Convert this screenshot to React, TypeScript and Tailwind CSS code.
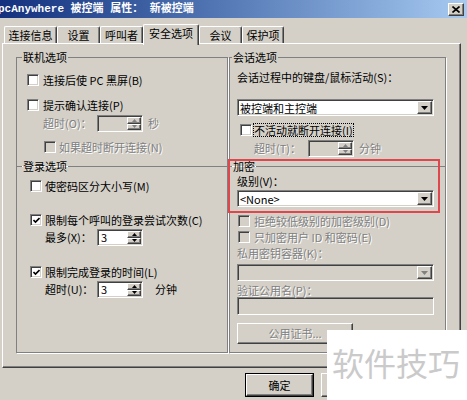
import React from 'react';
import clsx from 'clsx';

// win2k classic bevels
const sunken =
  'border border-t-[#808080] border-l-[#808080] border-r-white border-b-white shadow-[inset_1px_1px_0_#404040,inset_-1px_-1px_0_#d4d0c8]';
const raised =
  'border border-t-white border-l-white border-r-[#404040] border-b-[#404040] shadow-[inset_-1px_-1px_0_#808080,inset_1px_1px_0_#d4d0c8]';
const dim = 'text-[#808080] [text-shadow:1px_1px_0_#fff]';

function Box({ checked, disabled }: { checked?: boolean; disabled?: boolean }) {
  return (
    <span
      className={clsx(
        'w-[12px] h-[12px] flex items-center justify-center shrink-0',
        sunken,
        disabled ? 'bg-[#d4d0c8]' : 'bg-white'
      )}
    >
      {checked && (
        <svg width="7" height="7" viewBox="0 0 7 7">
          <path d="M0.5 3 L2.5 5 L6.5 1" stroke="#000" strokeWidth="1.6" fill="none" />
        </svg>
      )}
    </span>
  );
}

function Spin({ value, disabled }: { value?: string; disabled?: boolean }) {
  const arrow = disabled ? '#808080' : '#000';
  return (
    <div className={clsx('flex w-[46px] h-[17px] shrink-0', sunken, disabled ? 'bg-[#d4d0c8]' : 'bg-white')}>
      <span className="flex-1 pl-[3px] leading-[15px]">{value}</span>
      <div className="flex flex-col w-[14px] my-[1px] mr-[1px]">
        <span className={clsx('flex-1 flex items-center justify-center bg-[#d4d0c8]', raised)}>
          <svg width="5" height="3" viewBox="0 0 5 3"><path d="M2.5 0 L5 3 L0 3 Z" fill={arrow} /></svg>
        </span>
        <span className={clsx('flex-1 flex items-center justify-center bg-[#d4d0c8]', raised)}>
          <svg width="5" height="3" viewBox="0 0 5 3"><path d="M0 0 L5 0 L2.5 3 Z" fill={arrow} /></svg>
        </span>
      </div>
    </div>
  );
}

function Select({ value, disabled, className }: { value?: string; disabled?: boolean; className?: string }) {
  return (
    <div
      className={clsx(
        'flex items-center w-[197px] ml-[7px]',
        sunken,
        disabled ? 'bg-[#d4d0c8]' : 'bg-white',
        className
      )}
    >
      <span className="flex-1 pl-[2px] leading-[14px]">{value}</span>
      <span className={clsx('w-[15px] h-[13px] mr-[1px] flex items-center justify-center bg-[#d4d0c8]', raised)}>
        <svg width="7" height="4" viewBox="0 0 7 4">
          <path d="M0 0 L7 0 L3.5 4 Z" fill={disabled ? '#808080' : '#000'} />
        </svg>
      </span>
    </div>
  );
}

function Group({
  title,
  className,
  legendClass,
  children,
}: {
  title: string;
  className?: string;
  legendClass?: string;
  children?: React.ReactNode;
}) {
  return (
    <fieldset className={clsx('border border-[#808080] shadow-[1px_1px_0_#fff] min-w-0', className)}>
      <legend className={clsx('px-[1px] leading-[14px]', legendClass)}>{title}</legend>
      {children}
    </fieldset>
  );
}

const tabs = [
  { label: '连接信息', w: 'w-[53px]' },
  { label: '设置', w: 'w-[43px]' },
  { label: '呼叫者', w: 'w-[43px]' },
  { label: '安全选项', w: 'w-[56px]', active: true },
  { label: '会议', w: 'w-[43px]' },
  { label: '保护项', w: 'w-[42px]' },
];

export default function App() {
  return (
    <div className="relative w-[467px] h-[400px] overflow-hidden bg-[#d4d0c8] text-[11px] text-black font-['Noto_Sans_CJK_SC','Liberation_Sans',sans-serif]">
      {/* title bar */}
      <div className="flex items-center justify-between h-[18px] bg-gradient-to-r from-[#14307e] to-[#a6caf0]">
        <span className="-ml-[2px] text-white font-bold text-[11px] leading-[18px] font-['Liberation_Mono','Noto_Sans_CJK_SC',monospace]">
          pcAnywhere 被控端 属性： 新被控端
        </span>
        <span className={clsx('w-[16px] h-[13px] mr-[3px] flex items-center justify-center bg-[#d4d0c8]', raised)}>
          <svg width="8" height="7" viewBox="0 0 8 7">
            <path d="M0.5 0.5 L7.5 6.5 M7.5 0.5 L0.5 6.5" stroke="#000" strokeWidth="1.6" />
          </svg>
        </span>
      </div>

      {/* tabs */}
      <div className="flex items-end h-[19px] mt-[6px] pl-[4px]">
        {tabs.map((t) => (
          <div
            key={t.label}
            className={clsx(
              t.w,
              'flex items-center justify-center bg-[#d4d0c8] border-l border-t border-r border-l-white border-t-white border-r-[#404040] shadow-[inset_-1px_0_0_#808080] rounded-t-[2px]',
              t.active ? 'h-[21px] -mb-[2px] relative z-10 pb-[3px]' : 'h-[17px]'
            )}
          >
            {t.label}
          </div>
        ))}
      </div>

      {/* tab panel */}
      <div className="flex gap-[1px] ml-[2px] w-[459px] h-[325px] pl-[13px] pt-[6px] border border-t-white border-l-white border-r-[#404040] border-b-[#404040] shadow-[inset_-1px_-1px_0_#808080]">
        {/* left column */}
        <div className="flex flex-col w-[212px]">
          <Group title="联机选项" legendClass="ml-[5px]" className="h-[116px] border-b-0">
            <div className="flex items-center h-[16px] mt-[8px] pl-[10px] gap-[4px]">
              <Box />
              <span>连接后使 PC 黑屏(B)</span>
            </div>
            <div className="flex items-center h-[16px] mt-[9px] pl-[10px] gap-[4px]">
              <Box />
              <span>提示确认连接(P)</span>
            </div>
            <div className="flex items-center h-[17px] mt-[2px] pl-[26px]">
              <span className={clsx('w-[54px]', dim)}>超时(O)：</span>
              <Spin disabled />
              <span className={clsx('ml-[5px]', dim)}>秒</span>
            </div>
            <div className="flex items-center h-[16px] mt-[7px] pl-[27px] gap-[3px]">
              <Box disabled />
              <span className={dim}>如果超时断开连接(N)</span>
            </div>
          </Group>
          <Group title="登录选项" legendClass="ml-[5px]" className="h-[194px] -mt-[7px]">
            <div className="flex items-center h-[16px] mt-[5px] pl-[13px] gap-[3px]">
              <Box />
              <span>使密码区分大小写(M)</span>
            </div>
            <div className="flex items-center h-[16px] mt-[18px] pl-[13px] gap-[3px]">
              <Box checked />
              <span>限制每个呼叫的登录尝试次数(C)</span>
            </div>
            <div className="flex items-center h-[17px] mt-[1px] pl-[28px]">
              <span className="w-[52px]">最多(X)：</span>
              <Spin value="3" />
            </div>
            <div className="flex items-center h-[16px] mt-[18px] pl-[13px] gap-[3px]">
              <Box checked />
              <span>限制完成登录的时间(L)</span>
            </div>
            <div className="flex items-center h-[17px] mt-[1px] pl-[28px]">
              <span className="w-[52px]">超时(U)：</span>
              <Spin value="3" />
              <span className="ml-[12px]">分钟</span>
            </div>
          </Group>
        </div>

        {/* right column */}
        <div className="flex flex-col w-[217px]">
          <Group title="会话选项" legendClass="ml-[2px]" className="h-[116px] border-b-0">
            <div className="flex items-center h-[14px] mt-[6px] pl-[7px]">会话过程中的键盘/鼠标活动(S)：</div>
            <Select value="被控端和主控端" className="h-[17px] mt-[15px]" />
            <div className="flex items-center h-[16px] mt-[6px] pl-[10px] gap-[2px]">
              <Box />
              <span className="outline outline-1 outline-dotted outline-black leading-[12px]">不活动就断开连接(I)</span>
            </div>
            <div className="flex items-center h-[17px] mt-[2px] pl-[24px]">
              <span className={clsx('w-[54px]', dim)}>超时(T)：</span>
              <Spin disabled />
              <span className={clsx('ml-[5px]', dim)}>分钟</span>
            </div>
          </Group>
          <Group title="加密" legendClass="ml-[2px]" className="h-[194px] -mt-[7px]">
            <div className="flex items-center h-[14px] mt-[1px] pl-[7px]">级别(V)：</div>
            <Select value="<None>" className="h-[17px] mt-[2px]" />
            <div className="flex items-center h-[16px] mt-[6px] pl-[8px] gap-[4px]">
              <Box disabled />
              <span className={dim}>拒绝较低级别的加密级别(D)</span>
            </div>
            <div className="flex items-center h-[16px] pl-[8px] gap-[4px]">
              <Box disabled />
              <span className={dim}>只加密用户 ID 和密码(E)</span>
            </div>
            <div className={clsx('flex items-center h-[14px] mt-[1px] pl-[7px]', dim)}>私用密钥容器(K)：</div>
            <Select disabled className="h-[17px] mt-[4px]" />
            <div className={clsx('flex items-center h-[14px] mt-[2px] pl-[7px]', dim)}>验证公用名(P)：</div>
            <div className={clsx('w-[197px] h-[18px] ml-[7px] bg-[#d4d0c8]', sunken)} />
            <div
              className={clsx(
                'w-[116px] h-[21px] ml-[7px] mt-[8px] flex items-center justify-center bg-[#d4d0c8]',
                raised,
                dim
              )}
            >
              公用证书...
            </div>
          </Group>
        </div>
      </div>

      {/* dialog buttons (the rest sit under the watermark) */}
      <div className="flex gap-[7px] pl-[245px] mt-[5px]">
        <div className="w-[69px] h-[24px] border border-black">
          <div className={clsx('w-full h-full flex items-center justify-center bg-[#d4d0c8]', raised)}>确定</div>
        </div>
        <div className={clsx('w-[69px] h-[24px] bg-[#d4d0c8]', raised)} />
      </div>

      {/* red annotation box */}
      <div className="absolute left-[228px] top-[159px] w-[212px] h-[54px] border-2 border-[#e0474c]" />

      {/* watermark */}
      <div className="absolute left-[327px] top-[330px] w-[140px] h-[70px] bg-white pl-[5px] pt-[15px] text-[32px] leading-[34px] text-[#cacaca]">
        软件技巧
      </div>
    </div>
  );
}
